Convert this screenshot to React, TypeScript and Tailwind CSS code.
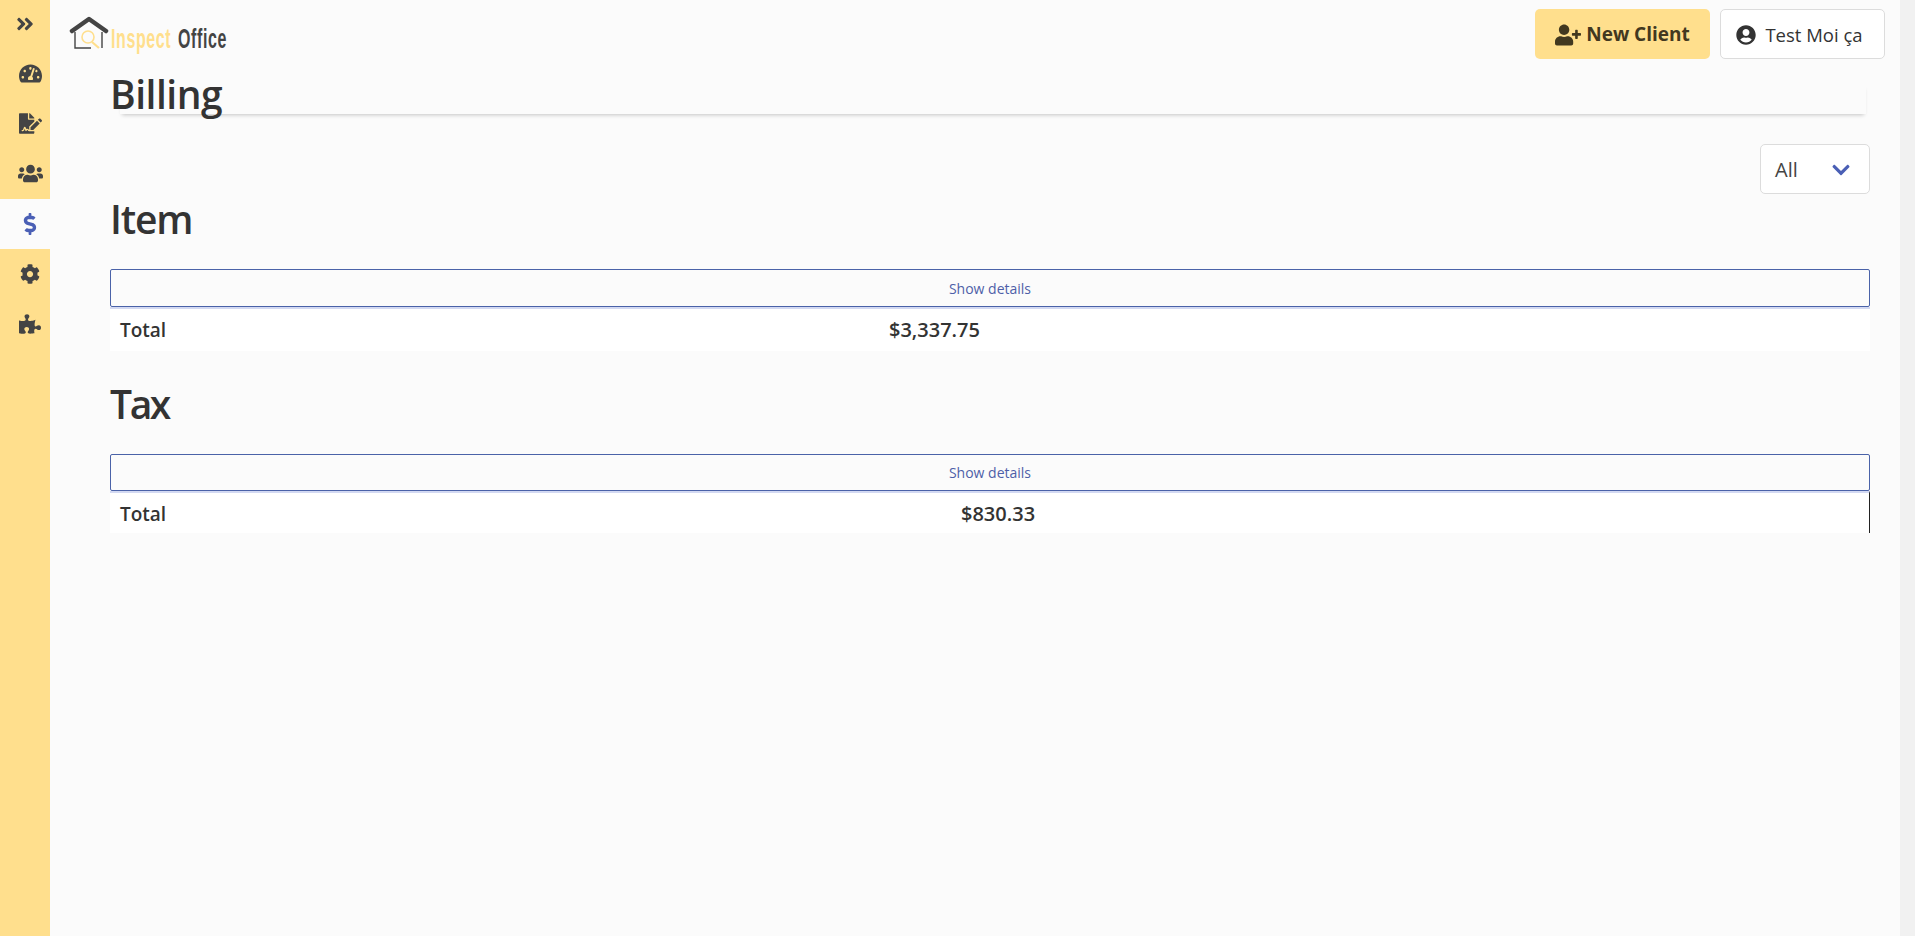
import { FaAngleDoubleRight, FaTachometerAlt, FaFileSignature, FaUsers, FaDollarSign, FaCog, FaPuzzlePiece, FaUserPlus, FaUserCircle, FaChevronDown } from "react-icons/fa";

function Logo() {
  return (
    <div className="flex items-end h-[40px] w-[160px] font-['Liberation_Sans',sans-serif]">
      <svg width="40" height="34" viewBox="0 0 40 34" className="shrink-0 mb-[5px]">
        <path d="M3 15 L20 3 L37 15" fill="none" stroke="#444" strokeWidth="4.5" strokeLinejoin="round" strokeLinecap="round" />
        <path d="M6 16 V32 H22 M33 16 V32" fill="none" stroke="#444" strokeWidth="1.4" />
        <circle cx="19" cy="21" r="6" fill="none" stroke="#ffdf8d" strokeWidth="1.6" />
        <path d="M23 26 L30 32" stroke="#ffdf8d" strokeWidth="2.2" />
      </svg>
      <span className="ml-[2px] w-[62px] shrink-0 whitespace-nowrap text-[28px] leading-[32px] font-bold tracking-[1.1px] text-[#ffdf8d] scale-x-[0.57] origin-left">Inspect</span>
      <span className="ml-[5px] w-[48px] shrink-0 whitespace-nowrap text-[28px] leading-[32px] font-bold tracking-[1.1px] text-[#444] scale-x-[0.57] origin-left">Office</span>
    </div>
  );
}

const nav = [
  { Icon: FaAngleDoubleRight, size: 20, cls: "h-[49px] pb-[1px] text-[#444]" },
  { Icon: FaTachometerAlt, size: 23, cls: "h-[50px] pl-[10px] pb-[2px] text-[#444]" },
  { Icon: FaFileSignature, size: 23, cls: "h-[50px] pl-[10px] pb-[2px] text-[#444]" },
  { Icon: FaUsers, size: 25, cls: "h-[50px] pl-[10px] pb-[2px] text-[#444]" },
  { Icon: FaDollarSign, size: 22, cls: "h-[50px] pl-[10px] bg-[#fbfbfb] text-[#4a5fb5]" },
  { Icon: FaCog, size: 20, cls: "h-[50px] pl-[10px] text-[#444]" },
  { Icon: FaPuzzlePiece, size: 22, cls: "h-[50px] pl-[10px] text-[#444]" },
];

function Section({ title, amount, first, gap, titleClass, btnClass, rowClass }: { title: string; amount: string; first: number; gap: string; titleClass: string; btnClass: string; rowClass: string }) {
  return (
    <section className={gap}>
      <h2 className={`h-[50px] text-[39px] leading-[50px] font-semibold text-[#333] ${titleClass}`}>{title}</h2>
      <button className={`mt-[25px] block w-full border border-[#4a62a8] rounded-[2px] text-[14px] text-[#4e5fa8] bg-[#fbfbfb] ${btnClass}`}>
        Show details
      </button>
      <div className={`flex items-center bg-white border-t-2 border-[#d3d9f2] text-[#333] font-semibold ${rowClass}`}>
        <span className="pl-[10px] text-[19px] leading-[28px]" style={{ width: first }}>Total</span>
        <span className="text-[20px] leading-[28px]">{amount}</span>
      </div>
    </section>
  );
}

export default function App() {
  return (
    <div className="flex h-[936px] overflow-hidden bg-[#fbfbfb] font-['Open_Sans','Noto_Sans',sans-serif] text-[#333]">
      <aside className="w-[50px] shrink-0 bg-[#ffdf8d] flex flex-col">
        {nav.map(({ Icon, size, cls }, i) => (
          <div key={i} className={`flex items-center justify-center ${cls}`}>
            <Icon size={size} />
          </div>
        ))}
      </aside>
      <div className="flex-1 min-w-0">
        <header className="h-[69px] flex items-start justify-between pl-[19px] pr-[15px] pt-[9px]">
          <div className="pt-[6px]"><Logo /></div>
          <div className="flex gap-[10px]">
            <button className="h-[50px] w-[175px] flex items-center justify-center gap-[5px] pt-[1px] rounded-[5px] bg-[#ffdf8d] text-[#42381f] font-bold text-[19px]">
              <FaUserPlus size={26} /> New Client
            </button>
            <button className="h-[50px] w-[165px] flex items-center justify-center gap-[9px] pt-[1px] pr-[6px] rounded-[5px] bg-white border border-[#dcdcdc] text-[#333] text-[18.5px]">
              <FaUserCircle size={20} /> Test Moi ça
            </button>
          </div>
        </header>
        <main className="pl-[60px] pr-[30px]">
          <div className="relative h-[45px]">
            <div className="absolute left-[10px] right-[4px] bottom-0 h-[30px] bg-[#fbfbfb] shadow-[0_3px_4px_-2px_rgba(0,0,0,0.22)]" />
            <h1 className="relative h-[45px] text-[39px] leading-[50px] font-semibold tracking-[-0.5px] text-[#333]">Billing</h1>
          </div>
          <div className="flex justify-end mt-[30px]">
            <div className="h-[50px] w-[110px] flex items-center justify-between pl-[14px] pr-[18px] pt-[1px] bg-white border border-[#dcdcdc] rounded-[5px] text-[20px] text-[#444]">
              All <FaChevronDown size={20} className="text-[#4a5fb5]" />
            </div>
          </div>
          <Section title="Item" amount="$3,337.75" first={779} gap="" titleClass="tracking-[-1.2px]" btnClass="h-[38px]" rowClass="h-[44px]" />
          <Section title="Tax" amount="$830.33" first={851} gap="mt-[28px]" titleClass="tracking-[-2.4px]" btnClass="h-[37px]" rowClass="h-[42px] pt-[1px] border-r border-r-[#222]" />
        </main>
      </div>
      <div className="w-[15px] shrink-0 bg-[#f1f1f1]" />
    </div>
  );
}
